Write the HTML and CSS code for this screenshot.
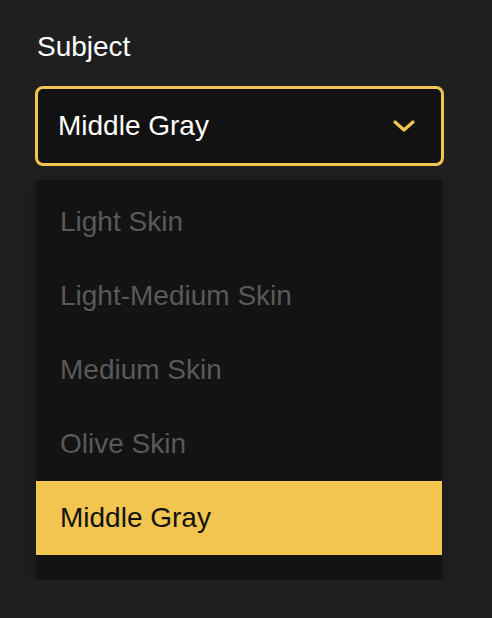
FILE: index.html
```html
<!DOCTYPE html>
<html lang="en">
<head>
    <meta charset="UTF-8">
    <meta name="viewport" content="width=device-width, initial-scale=1.0">
    <title>Subject</title>
    <link rel="stylesheet" href="styles.css">
</head>
<body>
    <div class="field">
        <label class="field-label">Subject</label>
        <div class="select">
            <span class="select-value">Middle Gray</span>
            <svg class="chevron" width="24" height="14" viewBox="0 0 24 14">
                <path d="M3 3 L12 11 L21 3" fill="none" stroke="#f2c550" stroke-width="3.2" stroke-linecap="round" stroke-linejoin="round"/>
            </svg>
        </div>
        <ul class="options">
            <li class="option">Light Skin</li>
            <li class="option">Light-Medium Skin</li>
            <li class="option">Medium Skin</li>
            <li class="option">Olive Skin</li>
            <li class="option selected">Middle Gray</li>
        </ul>
    </div>
</body>
</html>
```

FILE: styles.css
```css
body {
    margin: 0;
    padding: 0;
    background-color: #1f1f1f;
    font-family: 'Liberation Sans', Arial, sans-serif;
}

.field {
    display: flex;
    flex-direction: column;
    padding: 31px 48px 0 35px;
}

.field-label {
    color: #ffffff;
    font-size: 28px;
    line-height: 32px;
    padding-left: 2px;
    margin-bottom: 23px;
}

.select {
    display: flex;
    align-items: center;
    justify-content: space-between;
    height: 74px;
    padding: 0 25px 0 20px;
    background-color: #121212;
    border: 3px solid #f2c550;
    border-radius: 8px;
}

.select-value {
    color: #ffffff;
    font-size: 28px;
}

.chevron {
    display: block;
}

.options {
    list-style: none;
    margin: 14px 2px 0 1px;
    padding: 5px 0 25px 0;
    background-color: #131313;
    box-shadow: 0 4px 14px rgba(0, 0, 0, 0.25);
}

.option {
    display: flex;
    align-items: center;
    height: 74px;
    padding-left: 24px;
    font-size: 28px;
    color: #595959;
}

.option.selected {
    background-color: #f2c550;
    color: #121212;
}
```
